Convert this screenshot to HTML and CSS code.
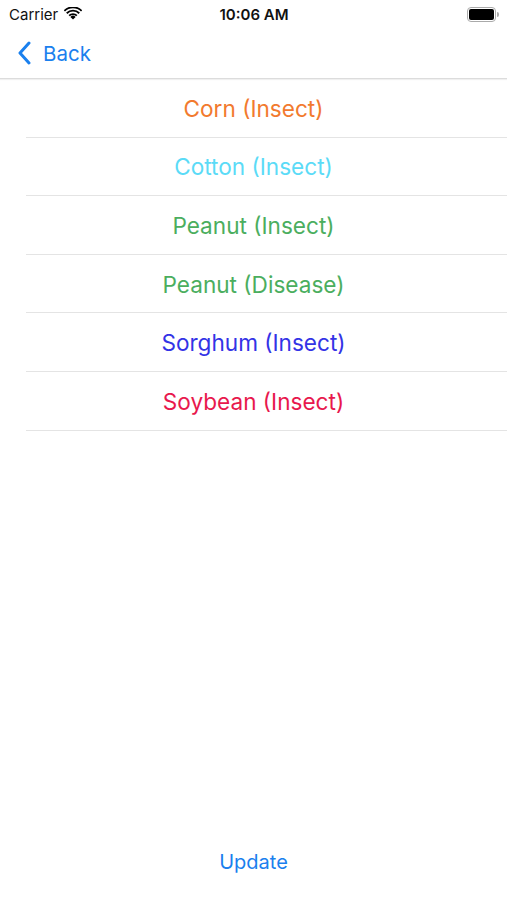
FILE: index.html
```html
<!DOCTYPE html>
<html lang="en">
<head>
    <meta charset="UTF-8">
    <meta name="viewport" content="width=device-width, initial-scale=1.0">
    <title>Crops</title>
    <link rel="stylesheet" href="styles.css">
</head>
<body>
    <div class="screen">
        <div class="status-bar">
            <div class="carrier">
                Carrier
                <svg class="wifi" width="18" height="13" viewBox="0 0 18 13">
                    <path d="M9 12.6 L6.4 9.9 A3.7 3.7 0 0 1 11.6 9.9 Z" fill="#000"/>
                    <path d="M4.5 8 A6.4 6.4 0 0 1 13.5 8 L12.2 9.3 A4.6 4.6 0 0 0 5.8 9.3 Z" fill="#000"/>
                    <path d="M2.1 5.6 A9.8 9.8 0 0 1 15.9 5.6 L14.6 6.9 A8 8 0 0 0 3.4 6.9 Z" fill="#000"/>
                    <path d="M-0.3 3.2 A13.2 13.2 0 0 1 18.3 3.2 L17 4.5 A11.4 11.4 0 0 0 1 4.5 Z" fill="#000"/>
                </svg>
            </div>
            <div class="time">10:06 AM</div>
            <div class="battery">
                <span class="battery-body"><span class="battery-fill"></span></span>
                <span class="battery-tip"></span>
            </div>
        </div>

        <div class="nav-bar">
            <a class="back" href="#">
                <svg width="14" height="24" viewBox="0 0 14 24">
                    <path d="M12 2 L3 12 L12 22" fill="none" stroke="#1a80ee" stroke-width="3" stroke-linecap="round" stroke-linejoin="round"/>
                </svg>
                Back
            </a>
        </div>

        <ul class="crop-list">
            <li class="crop corn">Corn (Insect)</li>
            <li class="crop cotton">Cotton (Insect)</li>
            <li class="crop peanut">Peanut (Insect)</li>
            <li class="crop peanut">Peanut (Disease)</li>
            <li class="crop sorghum">Sorghum (Insect)</li>
            <li class="crop soybean">Soybean (Insect)</li>
        </ul>

        <div class="footer">
            <button class="update">Update</button>
        </div>
    </div>
</body>
</html>
```

FILE: styles.css
```css
body {
    margin: 0;
    font-family: Inter, "Liberation Sans", Arial, sans-serif;
    background-color: #fff;
}

.screen {
    display: flex;
    flex-direction: column;
    height: 900px;
}

.status-bar {
    height: 28px;
    display: flex;
    align-items: center;
    justify-content: space-between;
    padding: 0 8px 0 9px;
    font-size: 15px;
    color: #111;
}

.carrier {
    flex: 1;
    display: flex;
    align-items: center;
    gap: 6px;
}

.wifi {
    margin-top: -2px;
}

.time {
    font-weight: 600;
    font-size: 15px;
}

.battery {
    flex: 1;
    display: flex;
    align-items: center;
    justify-content: flex-end;
}

.battery-body {
    width: 25px;
    height: 11px;
    border: 1px solid #aaa;
    border-radius: 4px;
    padding: 1px;
    display: flex;
}

.battery-fill {
    flex: 1;
    background-color: #000;
    border-radius: 2px;
}

.battery-tip {
    width: 2px;
    height: 5px;
    margin-left: 1px;
    background-color: #aaa;
    border-radius: 0 2px 2px 0;
}

.nav-bar {
    height: 50px;
    display: flex;
    align-items: center;
    padding-left: 17px;
    border-bottom: 1px solid #dcdcdc;
    box-shadow: 0 1px 1px rgba(0, 0, 0, 0.06);
}

.back {
    display: flex;
    align-items: center;
    gap: 12px;
    color: #1a80ee;
    font-size: 20.5px;
    text-decoration: none;
}

.crop-list {
    list-style: none;
    margin: 0;
    padding: 0;
    flex: 1;
}

.crop {
    height: 58.6px;
    box-sizing: border-box;
    display: flex;
    align-items: center;
    justify-content: center;
    font-size: 22.6px;
    background: linear-gradient(#e4e4e4, #e4e4e4) no-repeat 26px 100% / calc(100% - 26px) 1px;
}

.corn { color: #f27a2e; }
.cotton { color: #5bdbf7; }
.peanut { color: #4bae5e; }
.sorghum { color: #3333e6; }
.soybean { color: #e8184d; }

.footer {
    display: flex;
    justify-content: center;
    padding-bottom: 26px;
}

.update {
    background: none;
    border: none;
    padding: 0;
    font-family: inherit;
    font-size: 20px;
    color: #1a80ee;
    cursor: pointer;
}
```
